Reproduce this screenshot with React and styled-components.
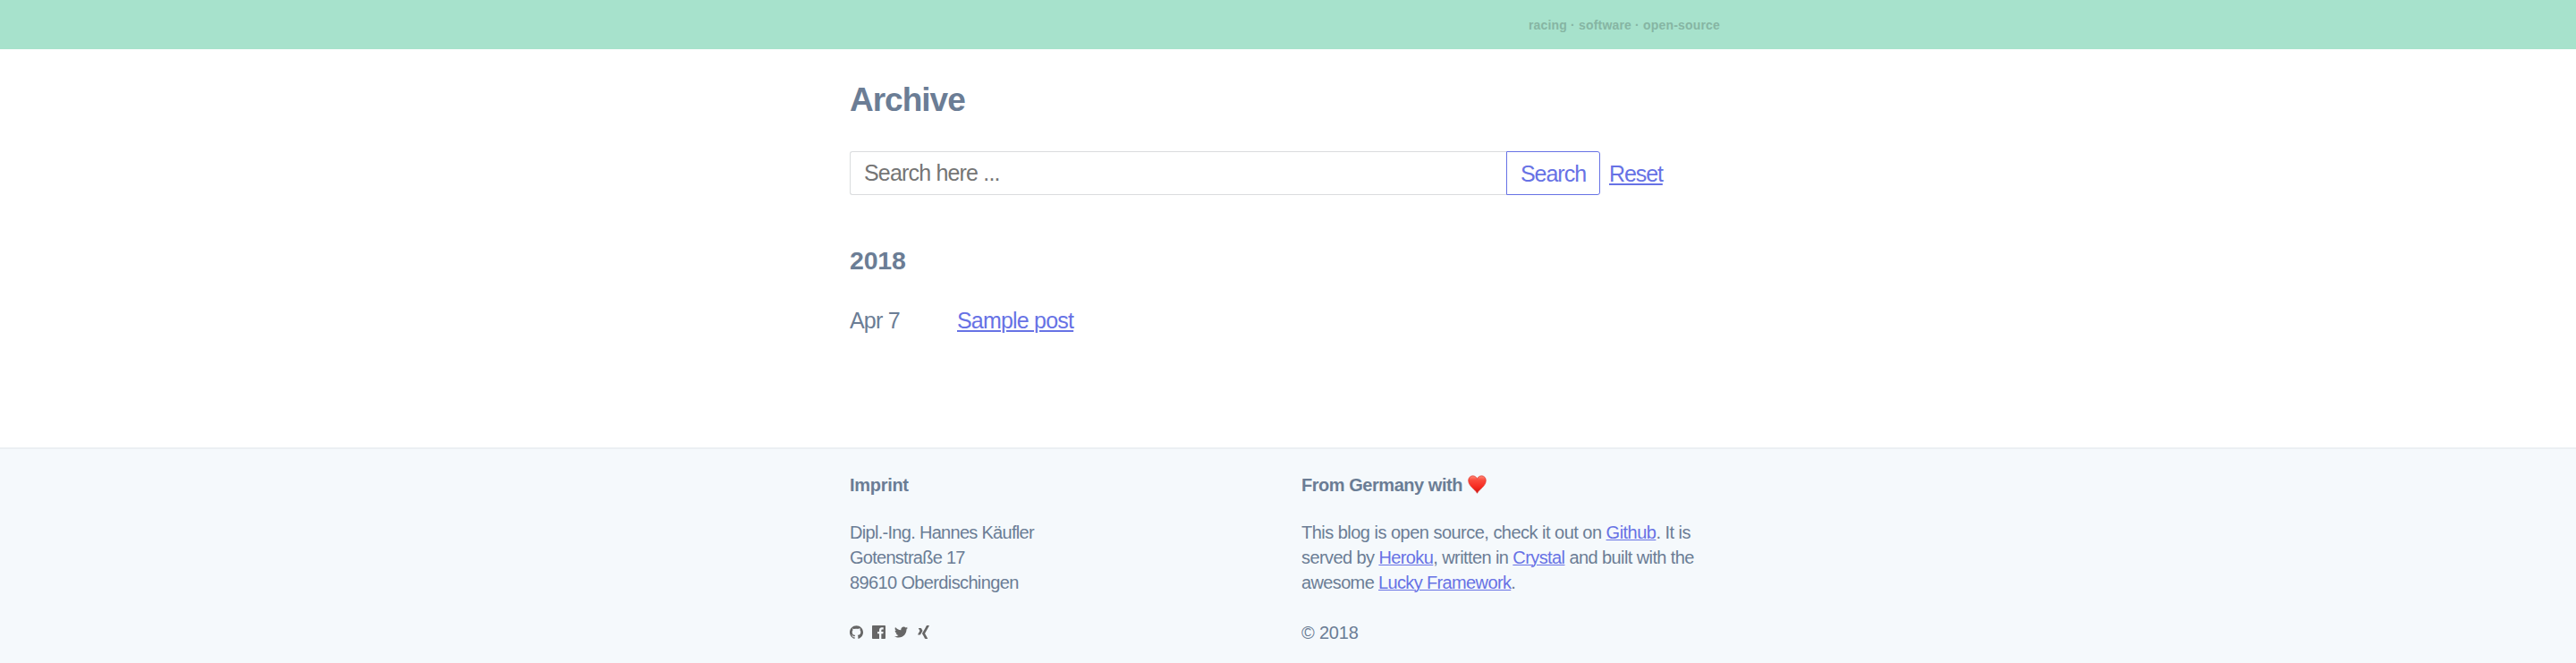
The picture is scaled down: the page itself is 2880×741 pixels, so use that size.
import React from "react";
import styled, { createGlobalStyle } from "styled-components";

const Global = createGlobalStyle`
  *, *::before, *::after { box-sizing: border-box; }
  body {
    margin: 0;
    background: #fff;
    color: #6b7d95;
    font-family: "Liberation Sans", Arial, sans-serif;
    font-size: 25px;
    line-height: 34px;
    letter-spacing: -0.8px;
  }
`;

const Page = styled.div`
  display: flex;
  flex-direction: column;
  height: 741px;
  overflow: hidden;
`;

const Container = styled.div`
  width: 980px;
  margin: 0 auto;
`;

const Header = styled.header`
  flex: none;
  height: 55px;
  background: #a7e2cc;
`;

const Tagline = styled.p`
  margin: 0;
  padding: 14px 7px 0 0;
  text-align: right;
  font-size: 14px;
  line-height: 28px;
  font-weight: 700;
  letter-spacing: 0.18px;
  color: #86b5a3;
`;

const Main = styled.main`
  flex: none;
  height: 445px;
`;

const Title = styled.h1`
  margin: 0;
  padding-top: 37px;
  font-size: 37px;
  line-height: 40px;
  font-weight: 700;
  letter-spacing: -1px;
`;

const SearchForm = styled.form`
  display: flex;
  align-items: center;
  margin-top: 37px;
  height: 49px;
`;

const SearchInput = styled.input`
  width: 734px;
  height: 49px;
  padding: 0 15px;
  border: 1px solid #dadcde;
  border-right: 0;
  border-radius: 3px 0 0 3px;
  background: #fff;
  font: inherit;
  letter-spacing: -0.82px;
  outline: none;
  &::placeholder { color: #757575; opacity: 1; }
`;

const SearchButton = styled.button`
  width: 105px;
  height: 49px;
  padding: 0;
  border: 1px solid #6772e5;
  border-radius: 0 3px 3px 0;
  background: #fff;
  color: #6772e5;
  font: inherit;
  letter-spacing: -1px;
`;

const Link = styled.a`
  color: #6772e5;
  text-decoration: underline;
  text-decoration-thickness: ${(p) => (p.$small ? "1px" : "2px")};
  text-underline-offset: ${(p) => (p.$small ? "1px" : "2px")};
`;

const ResetLink = styled(Link)`
  margin-left: 10px;
  letter-spacing: -1.1px;
`;

const Year = styled.h2`
  margin: 54px 0 0;
  font-size: 28.5px;
  line-height: 38px;
  font-weight: 700;
  letter-spacing: -0.2px;
`;

const Post = styled.div`
  display: flex;
  margin-top: 31px;
`;

const PostDate = styled.span`
  width: 120px;
`;

const Footer = styled.footer`
  flex: 1;
  border-top: 2px solid #ebeff3;
  background: #f5f9fc;
  font-size: 20px;
  line-height: 28px;
  letter-spacing: -0.5px;
`;

const Columns = styled(Container)`
  display: flex;
  padding-top: 26px;
`;

const Column = styled.section`
  width: ${(p) => p.$width}px;
  white-space: nowrap;
`;

const FooterHeading = styled.h3`
  display: flex;
  align-items: center;
  height: 28px;
  margin: 0 0 25px;
  font-size: 20px;
  line-height: 28px;
  letter-spacing: ${(p) => p.$spacing || -0.3}px;
`;

const Paragraph = styled.p`
  margin: 0 0 28px;
`;

const Line = styled.span`
  display: block;
  letter-spacing: ${(p) => p.$spacing || -0.5}px;
`;

const Heart = styled.svg`
  width: 21px;
  height: 21px;
  margin: -2px 0 0 6px;
`;

const Social = styled.div`
  display: flex;
  gap: 10px;
  padding-top: 6px;
`;

const Icon = styled.svg`
  width: 15px;
  height: 15px;
  fill: #666;
`;

const icons = [
  ["GitHub", "M12 .297c-6.63 0-12 5.373-12 12 0 5.303 3.438 9.8 8.205 11.385.6.113.82-.258.82-.577 0-.285-.01-1.04-.015-2.04-3.338.724-4.042-1.61-4.042-1.61C4.422 18.07 3.633 17.7 3.633 17.7c-1.087-.744.084-.729.084-.729 1.205.084 1.838 1.236 1.838 1.236 1.07 1.835 2.809 1.305 3.495.998.108-.776.417-1.305.76-1.605-2.665-.3-5.466-1.332-5.466-5.93 0-1.31.465-2.38 1.235-3.22-.135-.303-.54-1.523.105-3.176 0 0 1.005-.322 3.3 1.23.96-.267 1.98-.399 3-.405 1.02.006 2.04.138 3 .405 2.28-1.552 3.285-1.23 3.285-1.23.645 1.653.24 2.873.12 3.176.765.84 1.23 1.91 1.23 3.22 0 4.61-2.805 5.625-5.475 5.92.42.36.81 1.096.81 2.22 0 1.606-.015 2.896-.015 3.286 0 .315.21.69.825.57C20.565 22.092 24 17.592 24 12.297c0-6.627-5.373-12-12-12"],
  ["Facebook", "M22.676 0H1.324C.593 0 0 .593 0 1.324v21.352C0 23.408.593 24 1.324 24h11.494v-9.294H9.689v-3.621h3.129V8.41c0-3.099 1.894-4.785 4.659-4.785 1.325 0 2.464.097 2.796.141v3.24h-1.921c-1.5 0-1.792.721-1.792 1.771v2.311h3.584l-.465 3.63H16.56V24h6.115c.733 0 1.325-.592 1.325-1.324V1.324C24 .593 23.408 0 22.676 0"],
  ["Twitter", "M23.954 4.569c-.885.389-1.83.654-2.825.775 1.014-.611 1.794-1.574 2.163-2.723-.951.555-2.005.959-3.127 1.184-.896-.959-2.173-1.559-3.591-1.559-2.717 0-4.92 2.203-4.92 4.917 0 .39.045.765.127 1.124C7.691 8.094 4.066 6.13 1.64 3.161c-.427.722-.666 1.561-.666 2.475 0 1.71.87 3.213 2.188 4.096-.807-.026-1.566-.248-2.228-.616v.061c0 2.385 1.693 4.374 3.946 4.827-.413.111-.849.171-1.296.171-.314 0-.615-.03-.916-.086.631 1.953 2.445 3.377 4.604 3.417-1.68 1.319-3.809 2.105-6.102 2.105-.39 0-.779-.023-1.17-.067 2.189 1.394 4.768 2.209 7.557 2.209 9.054 0 13.999-7.496 13.999-13.986 0-.209 0-.42-.015-.63.961-.689 1.8-1.56 2.46-2.548l-.047-.02z"],
  ["Xing", "M18.188 0c-.517 0-.741.325-.927.66 0 0-7.455 13.224-7.702 13.657.015.024 4.919 9.023 4.919 9.023.17.308.436.66.967.66h3.454c.211 0 .375-.078.463-.22.089-.151.089-.346-.009-.536l-4.879-8.916c-.004-.006-.004-.016 0-.022L22.139.756c.095-.191.097-.387.006-.535C22.056.078 21.894 0 21.686 0h-3.498zM3.648 4.74c-.211 0-.385.074-.473.216-.09.149-.078.339.02.531l2.34 4.05c.004.01.004.016 0 .021L1.86 16.051c-.099.188-.093.381 0 .529.085.142.239.234.45.234h3.461c.518 0 .766-.348.945-.667l3.734-6.609-2.378-4.155c-.172-.315-.434-.659-.962-.659H3.648v.016z"],
];

export default function App() {
  return (
    <Page>
      <Global />
      <Header>
        <Container>
          <Tagline>racing · software · open-source</Tagline>
        </Container>
      </Header>
      <Main>
        <Container>
          <Title>Archive</Title>
          <SearchForm>
            <SearchInput placeholder="Search here ..." />
            <SearchButton type="button">Search</SearchButton>
            <ResetLink href="#">Reset</ResetLink>
          </SearchForm>
          <Year>2018</Year>
          <Post>
            <PostDate>Apr 7</PostDate>
            <Link href="#">Sample post</Link>
          </Post>
        </Container>
      </Main>
      <Footer>
        <Columns>
          <Column $width={505}>
            <FooterHeading>Imprint</FooterHeading>
            <Paragraph>
              <Line $spacing={-0.7}>Dipl.-Ing. Hannes Käufler</Line>
              <Line $spacing={-0.73}>Gotenstraße 17</Line>
              <Line $spacing={-0.63}>89610 Oberdischingen</Line>
            </Paragraph>
            <Social>
              {icons.map(([name, d]) => (
                <Icon key={name} viewBox="0 0 24 24" role="img" aria-label={name}>
                  <path d={d} />
                </Icon>
              ))}
            </Social>
          </Column>
          <Column $width={475}>
            <FooterHeading $spacing={-0.46}>
              From Germany with
              <Heart viewBox="0 0 21 21" role="img" aria-label="love">
                <defs>
                  <linearGradient id="heart" x1="0" y1="0" x2="0" y2="1">
                    <stop offset="0" stopColor="#ff8a78" />
                    <stop offset="0.25" stopColor="#fb4a3c" />
                    <stop offset="0.65" stopColor="#f62a20" />
                    <stop offset="1" stopColor="#c91412" />
                  </linearGradient>
                </defs>
                <path
                  d="M10.5 20.3C8.8 16.6.7 12.4.7 6.1.7 2.900 2.900.8 5.600.8c2.300 0 4.200 1.400 4.900 3.500C11.200 2.200 13.100.8 15.400.8c2.700 0 4.900 2.100 4.900 5.300 0 6.300-8.100 10.500-9.800 14.200z"
                  fill="url(#heart)"
                  stroke="#d92a22"
                  strokeWidth="0.6"
                />
              </Heart>
            </FooterHeading>
            <Paragraph>
              <Line $spacing={-0.52}>
                This blog is open source, check it out on <Link $small href="#">Github</Link>. It is
              </Line>
              <Line $spacing={-0.59}>
                served by <Link $small href="#">Heroku</Link>, written in <Link $small href="#">Crystal</Link> and built with the
              </Line>
              <Line $spacing={-0.64}>
                awesome <Link $small href="#">Lucky Framework</Link>.
              </Line>
            </Paragraph>
            <Paragraph>
              <Line $spacing={-0.2}>© 2018</Line>
            </Paragraph>
          </Column>
        </Columns>
      </Footer>
    </Page>
  );
}
